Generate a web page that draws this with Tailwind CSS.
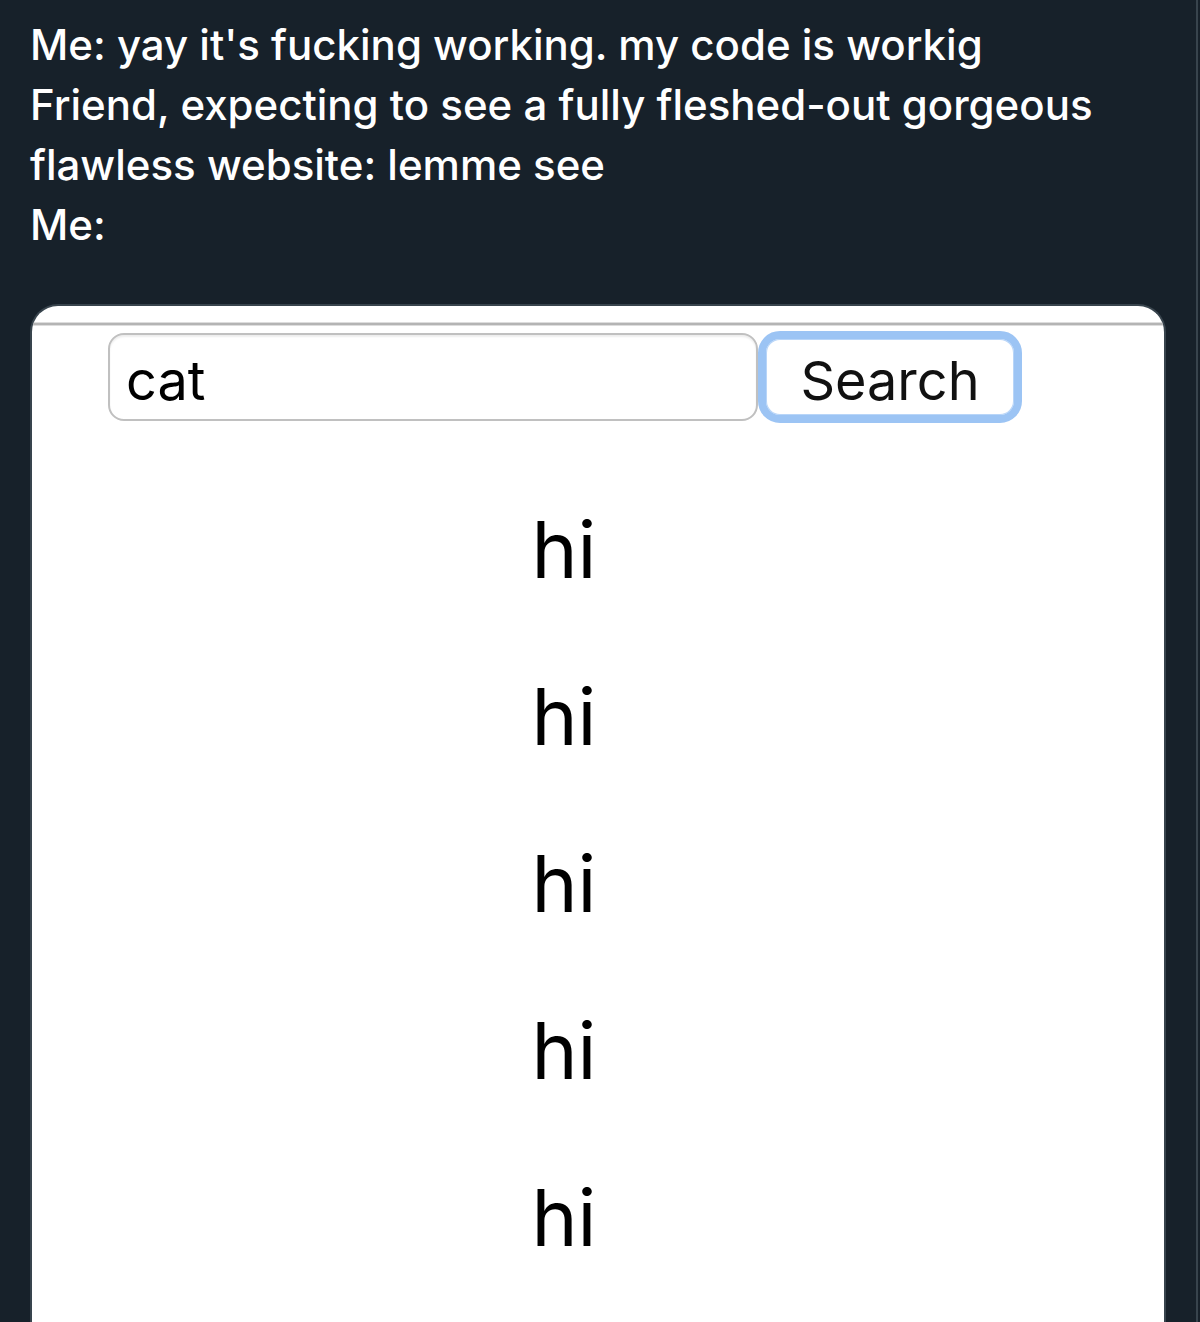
<!DOCTYPE html>
<html lang="en">
<head>
<meta charset="utf-8">
<title>Post</title>
<script src="https://cdn.jsdelivr.net/npm/@tailwindcss/browser@4"></script>
</head>
<body class="bg-[#17212a] font-['Inter',sans-serif]">
<main class="mr-0.5 min-h-screen flex flex-col border-r-2 border-[#38444d] pl-[30px] pr-[30px] pt-[15px]">
<p class="text-[42px] font-medium leading-[60px] text-white">Me: yay it's fucking working. my code is workig<br>Friend, expecting to see a fully fleshed-out gorgeous<br>flawless website: lemme see<br>Me:</p>
<section class="mt-[49px] grow rounded-t-[28px] border-2 border-b-0 border-[#38444d] bg-white overflow-hidden text-black">
<div class="mt-4 border-y-1 border-[#dddddd]"><hr class="border-t-2 border-[#b4b4b4]"></div>
<form class="flex items-center pt-[5px] pl-[76px]">
<input type="text" aria-label="Search term" value="cat" class="w-[650px] h-[88px] rounded-2xl border-2 border-[#c0c0c0] px-4 pt-1.5 text-[54px] shadow-[inset_0_2px_2px_#eeeeee]">
<button type="button" class="w-[264px] h-[92px] rounded-[22px] border-8 border-[#9cc4f4] pt-2 text-[54px] leading-[68px] text-[#111111] shadow-[inset_0_0_0_1px_#b8d5f8]">Search</button>
</form>
<ul class="mt-[43px] pr-[68px] text-center text-[78px] leading-[167px]">
<li>hi</li><li>hi</li><li>hi</li><li>hi</li><li>hi</li>
</ul>
</section>
</main>
</body>
</html>
